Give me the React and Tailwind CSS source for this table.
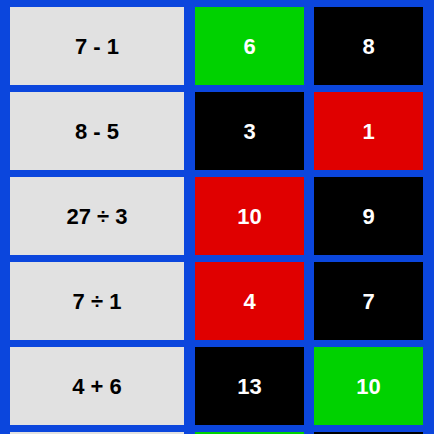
import React from 'react';

const rows = [
  { q: '7 - 1', a: { v: '6', c: 'green' }, b: { v: '8', c: 'black' } },
  { q: '8 - 5', a: { v: '3', c: 'black' }, b: { v: '1', c: 'red' } },
  { q: '27 ÷ 3', a: { v: '10', c: 'red' }, b: { v: '9', c: 'black' } },
  { q: '7 ÷ 1', a: { v: '4', c: 'red' }, b: { v: '7', c: 'black' } },
  { q: '4 + 6', a: { v: '13', c: 'black' }, b: { v: '10', c: 'green' } },
  // next row only peeks in at the bottom edge
  { q: '', a: { v: '', c: 'green' }, b: { v: '', c: 'black' } },
];

const bg = {
  green: 'bg-[#00d200]',
  black: 'bg-black',
  red: 'bg-[#e00000]',
};

const Answer = ({ cell, className }) => (
  <div className={`w-[109px] h-[78px] flex items-center justify-center text-white ${bg[cell.c]} ${className}`}>
    {cell.v}
  </div>
);

export default function App() {
  return (
    <div
      className="w-[434px] h-[434px] overflow-hidden bg-[#0b46dd] pt-[7px] pl-[10px] flex flex-col gap-[7px] text-[22px] font-bold"
      style={{ fontFamily: '"Liberation Sans", Arial, sans-serif' }}
    >
      {rows.map((r, i) => (
        <div key={i} className="flex shrink-0">
          <div className="w-[174px] h-[78px] bg-[#e1e1e1] flex items-center justify-center text-black">
            {r.q}
          </div>
          <Answer cell={r.a} className="ml-[11px]" />
          <Answer cell={r.b} className="ml-[10px]" />
        </div>
      ))}
    </div>
  );
}
